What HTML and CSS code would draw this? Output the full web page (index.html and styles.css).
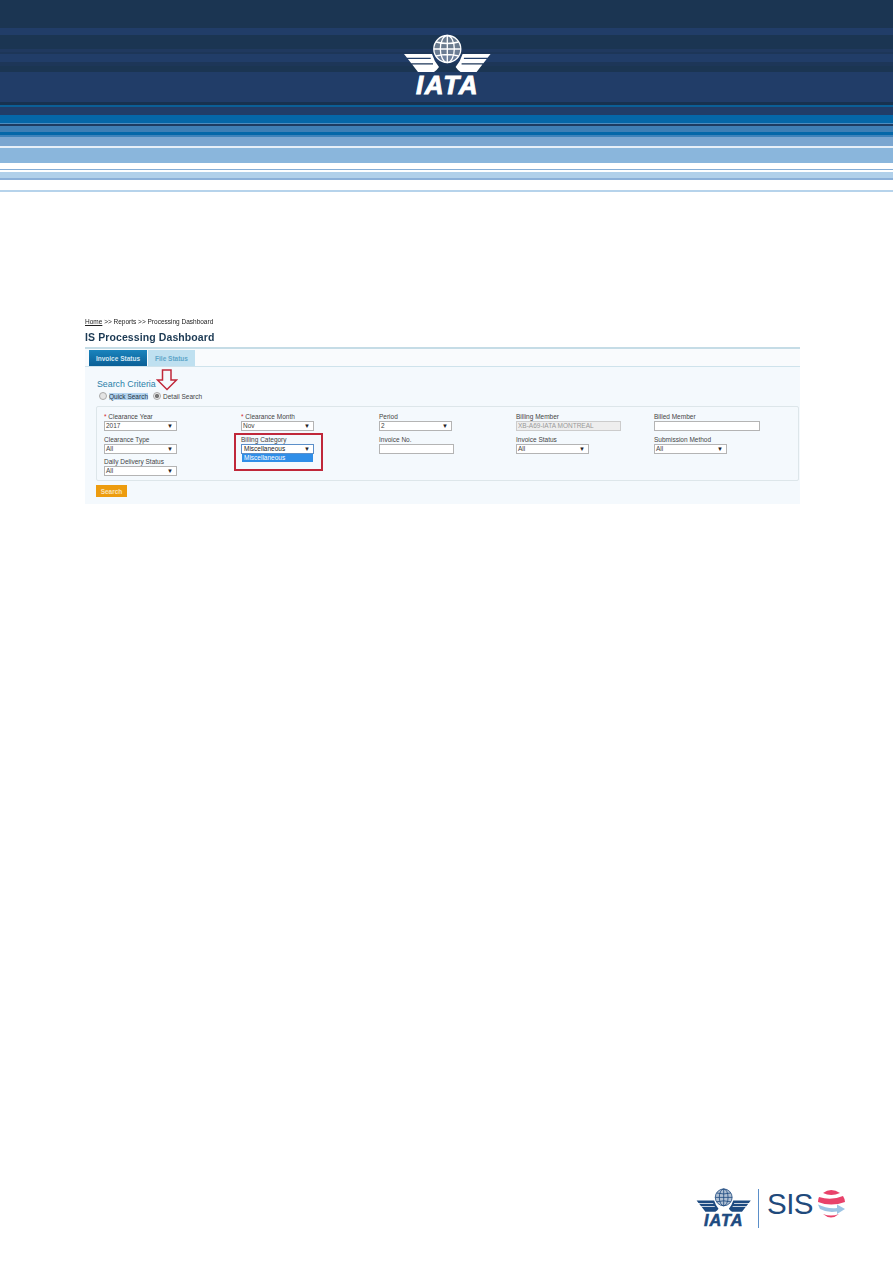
FILE: index.html
```html
<!DOCTYPE html>
<html lang="en">
<head>
<meta charset="utf-8">
<title>IS Processing Dashboard</title>
<link rel="stylesheet" href="styles.css">
</head>
<body>
<svg class="defs" width="0" height="0" aria-hidden="true">
  <symbol id="iata-mark" viewBox="0 0 88 68">
    <circle cx="44.300" cy="15" r="13.500" class="globe"/>
    <g class="grid">
      <circle cx="44.300" cy="15" r="13.500"/>
      <ellipse cx="44.300" cy="15" rx="7" ry="13.500"/>
      <path d="M44.300 1.500V28.500M30.800 15H57.800M33 8Q44.300 11 55.600 8M33 22Q44.300 19 55.600 22"/>
    </g>
    <path class="wing" d="M1 20H29Q31 27 36 33Q34 36 31 38H15L9.200 30.500H30V29.200H8.200L4.900 25H27.700V23.800H4Z"/>
    <path class="wing" transform="matrix(-1 0 0 1 88.600 0)" d="M1 20H29Q31 27 36 33Q34 36 31 38H15L9.200 30.500H30V29.200H8.200L4.900 25H27.700V23.800H4Z"/>
  </symbol>
</svg>

<header class="banner">
  <svg class="logo-main" viewBox="0 0 88 68" role="img" aria-label="IATA">
    <use href="#iata-mark"/>
    <text x="44.500" y="60" text-anchor="middle" class="iata-text">IATA</text>
  </svg>
</header>

<main class="doc">
  <div class="shot">
    <div class="crumbs"><a class="home">Home</a> &gt;&gt; Reports &gt;&gt; Processing Dashboard</div>
    <h1 class="title">IS Processing Dashboard</h1>
    <section class="frame">
      <nav class="tabs">
        <span class="tab tab-on">Invoice Status</span>
        <span class="tab tab-off">File Status</span>
      </nav>
      <div class="body">
        <h2 class="crit">Search Criteria</h2>
        <div class="radios">
          <span class="radio"></span><span class="sel-text">Quick Search</span>
          <span class="radio radio-on"></span><span>Detail Search</span>
        </div>
        <div class="panel">
          <div class="field"><label><i>*</i> Clearance Year</label><div class="select w73"><span>2017</span><b>▼</b></div></div>
          <div class="field"><label><i>*</i> Clearance Month</label><div class="select w73"><span>Nov</span><b>▼</b></div></div>
          <div class="field"><label>Period</label><div class="select w73"><span>2</span><b>▼</b></div></div>
          <div class="field"><label>Billing Member</label><div class="input input-dis w105">XB-A69-IATA MONTREAL</div></div>
          <div class="field"><label>Billed Member</label><div class="input w106"></div></div>

          <div class="field"><label>Clearance Type</label><div class="select w73"><span>All</span><b>▼</b></div></div>
          <div class="field"><label>Billing Category</label>
            <div class="select select-open w73"><span>Miscellaneous</span><b>▼</b>
              <div class="option">Miscellaneous</div>
            </div>
          </div>
          <div class="field"><label>Invoice No.</label><div class="input w75"></div></div>
          <div class="field"><label>Invoice Status</label><div class="select w73"><span>All</span><b>▼</b></div></div>
          <div class="field"><label>Submission Method</label><div class="select w73"><span>All</span><b>▼</b></div></div>

          <div class="field"><label>Daily Delivery Status</label><div class="select w73"><span>All</span><b>▼</b></div></div>
        </div>
        <button class="btn">Search</button>
      </div>
      <div class="redbox"></div>
      <svg class="arrow" viewBox="0 0 22 22" aria-hidden="true"><path d="M6.500 1H15V11H20.500L11 20.500 1.500 11H6.500Z"/></svg>
    </section>
  </div>
</main>

<footer class="foot">
  <svg class="logo-foot" viewBox="0 0 88 68" role="img" aria-label="IATA">
    <use href="#iata-mark"/>
    <text x="44.500" y="60" text-anchor="middle" class="iata-text">IATA</text>
  </svg>
  <span class="divider"></span>
  <span class="sis">SIS</span>
  <svg class="sis-globe" viewBox="0 0 30 32" aria-hidden="true">
    <path class="pink" d="M6 5Q14 -1 23 5Q14 9 6 5Z"/>
    <path class="pink" d="M2 9Q14 13 26 8Q28 11 28 14Q14 19 1 14Q1 11 2 9Z"/>
    <path class="blue" d="M1 16.500Q10 21 20 20V16.500L28 21 20 26V23.500Q10 25 3 21Z"/>
    <path class="pink" d="M6 26Q14 29 22 26Q14 33 6 26Z"/>
  </svg>
</footer>
</body>
</html>
```
FILE: styles.css
```css
* { box-sizing: border-box; }
html, body { margin: 0; padding: 0; }
body {
  width: 893px;
  height: 1263px;
  background: #fff;
  display: flex;
  flex-direction: column;
  font-family: "Liberation Sans", Arial, sans-serif;
  overflow: hidden;
}
.defs { position: absolute; }

.banner {
  height: 192px;
  flex: none;
  display: flex;
  justify-content: center;
  padding: 34px 0 0 1px;
  background: linear-gradient(to bottom,
    #1b3552 0 28px, #213d68 28px 35px, #1b3552 35px 49px, #20395f 49px 52px,
    #1d3658 52px 54px, #213d68 54px 62px, #1d3658 62px 66px, #1b3552 66px 72px,
    #213d68 72px 102px, #18324f 102px 105px, #0b5f96 105px 107px, #213d68 107px 115px,
    #0567a8 115px 123px, #4d8dc0 123px 124px, #1d3c62 124px 126px, #3f7fb5 126px 132px,
    #0567a8 132px 135px, #3f82ba 135px 137px, #7ba6d0 137px 146px, #e8f0f8 146px 148px,
    #8ab6dc 148px 163px, #fff 163px 169px, #85add6 169px 170px, #fff 170px 172px,
    #b1d0ea 172px 178px, #8cb0d8 178px 180px, #fff 180px 190px, #b6d3eb 190px 192px);
}
.logo-main { width: 88px; height: 68px; color: #fff; }
.globe { fill: currentColor; fill-opacity: .35; }
.wing, .iata-text { fill: currentColor; }
.grid { fill: none; stroke: currentColor; stroke-width: 1.300; }
.iata-text {
  font-family: "Liberation Sans", Arial, sans-serif;
  font-weight: 700;
  font-style: italic;
  font-size: 26px;
  letter-spacing: 1.600px;
  stroke: currentColor;
  stroke-width: .9;
}

.doc { flex: 1; padding: 126px 93px 0 85px; }
.shot { filter: blur(.45px); }
.crumbs { font-size: 6.500px; line-height: 8px; color: #222; }
.home { text-decoration: underline; color: #222; }
.title {
  margin: 5px 0 0;
  font-size: 10.500px;
  line-height: 13px;
  font-weight: 700;
  color: #1c3a54;
  letter-spacing: .1px;
}
.frame {
  position: relative;
  margin-top: 3px;
  border-top: 2px solid #c5dce6;
  height: 157px;
  background: #f4f9fd;
}
.tabs {
  display: flex;
  gap: 1px;
  height: 18px;
  padding: 1px 0 0 4px;
  background: #f9fbfd;
  border-bottom: 1px solid #cfe3ec;
}
.tab {
  display: flex;
  align-items: center;
  justify-content: center;
  font-size: 6.500px;
  font-weight: 700;
}
.tab-on {
  width: 58px;
  color: #d5e8f4;
  background: linear-gradient(#1a84bd, #0a5f96);
}
.tab-off { width: 47px; color: #5fa6c9; background: #bfe0f0; }
.body { padding: 12px 0 0 11px; }
.crit {
  margin: 0 0 1px 1px;
  font-size: 8.800px;
  line-height: 11px;
  font-weight: 400;
  color: #2a7ea8;
}
.radios {
  display: flex;
  align-items: center;
  height: 11px;
  margin-left: 3px;
  font-size: 6.500px;
  color: #444;
}
.radio {
  width: 8px;
  height: 8px;
  margin-right: 2px;
  border-radius: 50%;
  border: 1px solid #aaa;
  background: #e4e4e4;
  transform: translateY(-1px);
}
.radio-on { margin-left: 5px; background: radial-gradient(#777 0 1.800px, #eee 2.400px); }
.sel-text { background: #b3d4f0; color: #234; }
.panel {
  display: grid;
  grid-template-columns: 137px 138px 137px 138px 138px;
  grid-auto-rows: 22.500px;
  width: 703px;
  height: 75px;
  margin-top: 4px;
  padding: 6px 0 0 7px;
  border: 1px solid #dde6ea;
  border-radius: 2px;
}
.field label {
  display: block;
  font-size: 6.500px;
  line-height: 8px;
  color: #444;
}
.field i { color: #d0202a; font-style: normal; }
.select, .input {
  position: relative;
  height: 10px;
  font-size: 6.500px;
  line-height: 8px;
  background: #fff;
  border: 1px solid #b4b4b4;
  color: #444;
}
.select { display: flex; justify-content: space-between; padding: 0 3px 0 1px; }
.select b { font-size: 6px; font-weight: 400; color: #222; }
.input { padding-left: 1px; }
.input-dis { background: #eee; color: #999; border-color: #ccc; }
.w73 { width: 73px; }
.w75 { width: 75px; }
.w105 { width: 105px; }
.w106 { width: 106px; }
.select-open { border-color: #5b8fc9; color: #222; padding-left: 2px; }
.option {
  position: absolute;
  left: 0;
  right: 0;
  top: 9px;
  height: 8px;
  padding-left: 2px;
  background: #2f8ee8;
  color: #fff;
  line-height: 7px;
}
.btn {
  display: block;
  width: 31px;
  height: 12px;
  margin-top: 4px;
  padding: 0;
  border: 0;
  background: #ed9c0f;
  color: #fbe3b5;
  font: 700 6.500px "Liberation Sans", Arial, sans-serif;
}
.redbox {
  position: absolute;
  left: 149px;
  top: 84px;
  width: 89px;
  height: 38px;
  border: 2px solid #c0283a;
}
.arrow {
  position: absolute;
  left: 71px;
  top: 20px;
  width: 22px;
  height: 22px;
}
.arrow path { fill: none; stroke: #c0283a; stroke-width: 1.500; }

.foot {
  flex: none;
  height: 76px;
  padding: 0 48px 0 696px;
  display: flex;
  align-items: flex-start;
  color: #1d4a80;
}
.logo-foot { width: 55px; height: 42.500px; margin-top: 1px; flex: none; }
.divider { width: 1px; height: 39px; margin: 2px 0 0 7px; background: #5b8fc9; flex: none; }
.sis { margin: 0 0 0 8px; font-size: 29.500px; line-height: 34px; letter-spacing: -.5px; color: #1f4a7c; }
.sis-globe { width: 30px; height: 32px; margin: 1px 0 0 4px; flex: none; }
.pink { fill: #e8426a; }
.blue { fill: #9cc4e4; }
```
